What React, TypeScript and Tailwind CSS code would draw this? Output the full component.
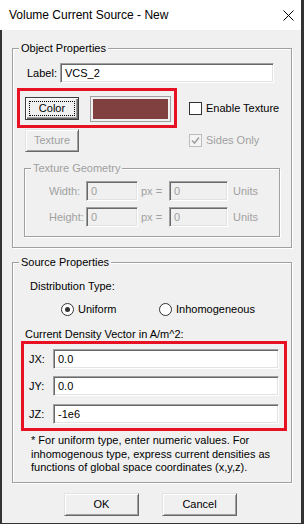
import React from "react";

const FONT = "font-['Liberation_Sans',Arial,sans-serif]";

function Edit({ value, w, disabled }: { value: string; w: string; disabled?: boolean }) {
  return (
    <div
      className={`${w} h-[20px] shrink-0 flex items-center pl-[4px] border border-t-[#a0a0a0] border-l-[#a0a0a0] border-r-white border-b-white shadow-[inset_1px_1px_0_#696969,inset_-1px_-1px_0_#e3e3e3] ${
        disabled ? "bg-[#f0f0f0] text-[#a0a0a0]" : "bg-white text-black"
      }`}
    >
      {value}
    </div>
  );
}

function Btn({
  label,
  w,
  disabled,
  isDefault,
}: {
  label: string;
  w: string;
  disabled?: boolean;
  isDefault?: boolean;
}) {
  if (isDefault) {
    return (
      <div className={`${w} h-[23px] shrink-0 border border-[#3c3c3c] bg-[#f0f0f0]`}>
        <div className="relative w-full h-full flex items-center justify-center shadow-[inset_1px_1px_0_#fff,inset_-1px_-1px_0_#696969,inset_-2px_-2px_0_#a0a0a0] text-black">
          <div className="absolute left-[3px] top-[3px] right-[3px] bottom-[3px] border border-dotted border-black" />
          {label}
        </div>
      </div>
    );
  }
  return (
    <div
      className={`${w} h-[23px] shrink-0 flex items-center justify-center bg-[#f0f0f0] border border-t-[#e3e3e3] border-l-[#e3e3e3] border-r-[#696969] border-b-[#696969] shadow-[inset_1px_1px_0_#fff,inset_-1px_-1px_0_#a0a0a0] ${
        disabled ? "text-[#a0a0a0]" : "text-black"
      }`}
    >
      {label}
    </div>
  );
}

function Check({ checked, disabled }: { checked?: boolean; disabled?: boolean }) {
  return (
    <div
      className={`w-[13px] h-[13px] shrink-0 border flex items-center justify-center ${
        disabled ? "border-[#bcbcbc] bg-[#f4f4f4]" : "border-[#333333] bg-white"
      }`}
    >
      {checked && (
        <svg width="9" height="9" viewBox="0 0 9 9">
          <path d="M1 4.5 L3.5 7 L8 1.5" fill="none" stroke={disabled ? "#a0a0a0" : "#000"} strokeWidth="1.6" />
        </svg>
      )}
    </div>
  );
}

function Radio({ checked }: { checked?: boolean }) {
  return (
    <div className="w-[13px] h-[13px] shrink-0 rounded-full border border-[#333333] bg-white flex items-center justify-center">
      {checked && <div className="w-[5px] h-[5px] rounded-full bg-[#333333]" />}
    </div>
  );
}

function GroupLabel({ text, disabled }: { text: string; disabled?: boolean }) {
  return (
    <span
      className={`absolute left-[6px] -top-[8px] bg-[#f0f0f0] px-[2px] leading-[14px] whitespace-nowrap ${
        disabled ? "text-[#a0a0a0]" : "text-black"
      }`}
    >
      {text}
    </span>
  );
}

export default function App() {
  return (
    <div
      className={`${FONT} w-[304px] h-[524px] flex flex-col bg-[#f0f0f0] border-r-[3px] border-b border-[#333333] text-[11px] text-black overflow-hidden`}
    >
      {/* Title bar */}
      <div className="h-[30px] shrink-0 bg-white flex items-center justify-between pl-[9px]">
        <span className="text-[12px] whitespace-nowrap">Volume Current Source - New</span>
        <svg width="11" height="11" viewBox="0 0 11 11" className="mr-[7px]">
          <path d="M0.5 0.5 L10.5 10.5 M10.5 0.5 L0.5 10.5" stroke="#000" strokeWidth="1" />
        </svg>
      </div>

      {/* Body */}
      <div className="flex-1 flex flex-col border-l-2 border-[#333333]">
        {/* Object Properties */}
        <div className="relative ml-[10px] mt-[18px] w-[280px] h-[200px] shrink-0 border border-[#a0a0a0] shadow-[inset_1px_1px_0_#fff,1px_1px_0_#fff]">
          <GroupLabel text="Object Properties" />
          <div className="pt-[14px] flex flex-col">
            <div className="h-[20px] flex items-center">
              <span className="w-[47px] pl-[14px] shrink-0">Label:</span>
              <Edit value="VCS_2" w="w-[214px]" />
            </div>

            <div className="relative mt-[14px] h-[23px] flex items-center">
              <div className="ml-[12px]">
                <Btn label="Color" w="w-[54px]" isDefault />
              </div>
              <div className="ml-[11px] w-[81px] h-[26px] shrink-0 border border-[#a0a0a0] bg-[#f0f0f0] p-[2px]">
                <div className="w-full h-full bg-[#804040]" />
              </div>
              <div className="ml-[18px] flex items-center">
                <Check />
                <span className="ml-[4px] whitespace-nowrap">Enable Texture</span>
              </div>
              <div className="absolute left-[4px] -top-[9px] w-[160px] h-[40px] border-[3px] border-[#e81123]" />
            </div>

            <div className="mt-[9px] h-[23px] flex items-center">
              <div className="ml-[12px]">
                <Btn label="Texture" w="w-[54px]" disabled />
              </div>
              <div className="ml-[110px] flex items-center">
                <Check checked disabled />
                <span className="ml-[4px] whitespace-nowrap text-[#a0a0a0]">Sides Only</span>
              </div>
            </div>

            {/* Texture Geometry */}
            <div className="relative ml-[11px] mt-[16px] w-[256px] h-[69px] border border-[#a0a0a0] shadow-[inset_1px_1px_0_#fff,1px_1px_0_#fff] text-[#a0a0a0]">
              <GroupLabel text="Texture Geometry" disabled />
              <div className="pt-[12px] flex flex-col">
                <div className="h-[20px] flex items-center">
                  <span className="w-[61px] pl-[24px] shrink-0">Width:</span>
                  <Edit value="0" w="w-[52px]" disabled />
                  <span className="w-[31px] pl-[3px] shrink-0 whitespace-nowrap">px =</span>
                  <Edit value="0" w="w-[59px]" disabled />
                  <span className="pl-[5px]">Units</span>
                </div>
                <div className="mt-[6px] h-[20px] flex items-center">
                  <span className="w-[61px] pl-[24px] shrink-0">Height:</span>
                  <Edit value="0" w="w-[52px]" disabled />
                  <span className="w-[31px] pl-[3px] shrink-0 whitespace-nowrap">px =</span>
                  <Edit value="0" w="w-[59px]" disabled />
                  <span className="pl-[5px]">Units</span>
                </div>
              </div>
            </div>
          </div>
        </div>

        {/* Source Properties */}
        <div className="relative ml-[10px] mt-[14px] w-[280px] h-[221px] shrink-0 border border-[#a0a0a0] shadow-[inset_1px_1px_0_#fff,1px_1px_0_#fff]">
          <GroupLabel text="Source Properties" />
          <div className="pt-[15px] flex flex-col">
            <div className="h-[16px] flex items-center pl-[17px]">Distribution Type:</div>
            <div className="mt-[7px] h-[16px] flex items-center pl-[48px]">
              <div className="w-[98px] flex items-center">
                <Radio checked />
                <span className="ml-[4px]">Uniform</span>
              </div>
              <div className="flex items-center">
                <Radio />
                <span className="ml-[4px]">Inhomogeneous</span>
              </div>
            </div>
            <div className="mt-[9px] h-[16px] flex items-center pl-[12px] whitespace-nowrap">
              Current Density Vector in A/m^2:
            </div>

            <div className="relative mt-[7px] h-[20px] flex items-center">
              <span className="w-[40px] pl-[16px] shrink-0">JX:</span>
              <Edit value="0.0" w="w-[226px]" />
              <div className="absolute left-[8px] -top-[8px] w-[266px] h-[90px] border-[3px] border-[#e81123]" />
            </div>
            <div className="mt-[7px] h-[20px] flex items-center">
              <span className="w-[40px] pl-[16px] shrink-0">JY:</span>
              <Edit value="0.0" w="w-[226px]" />
            </div>
            <div className="mt-[8px] h-[20px] flex items-center">
              <span className="w-[40px] pl-[16px] shrink-0">JZ:</span>
              <Edit value="-1e6" w="w-[226px]" />
            </div>

            <div className="mt-[10px] pl-[18px] leading-[13.5px] whitespace-nowrap">
              * For uniform type, enter numeric values. For
              <br />
              inhomogenous type, express current densities as
              <br />
              functions of global space coordinates (x,y,z).
            </div>
          </div>
        </div>

        {/* Buttons */}
        <div className="mt-[10px] flex items-center">
          <div className="ml-[62px]">
            <Btn label="OK" w="w-[75px]" />
          </div>
          <div className="ml-[23px]">
            <Btn label="Cancel" w="w-[75px]" />
          </div>
        </div>
      </div>
    </div>
  );
}
